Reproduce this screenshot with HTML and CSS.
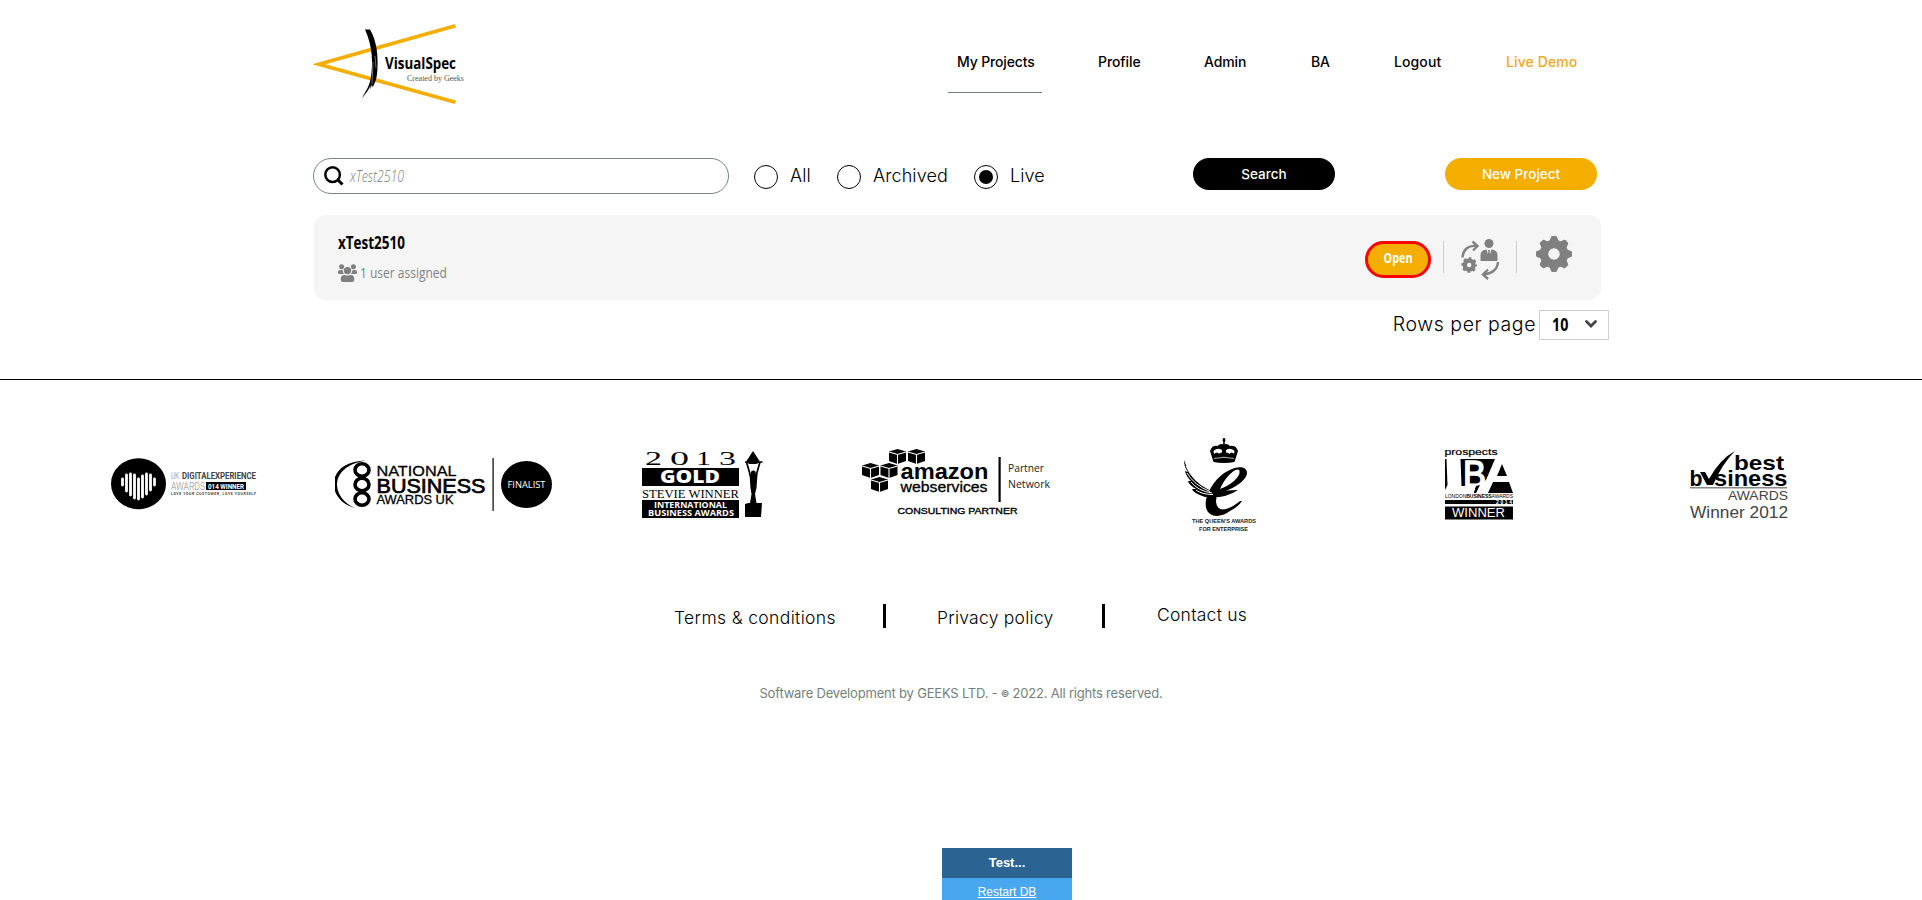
FILE: index.html
```html
<!DOCTYPE html>
<html lang="en">
<head>
<meta charset="utf-8">
<title>VisualSpec - My Projects</title>
<link rel="stylesheet" href="styles.css">
</head>
<body>
<header class="header">
  <svg class="logo" width="155" height="86" viewBox="0 0 155 86">
    <path d="M142.500 5.800L6 44.300L142.500 82.300" fill="none" stroke="#f4ae00" stroke-width="3.600" stroke-miterlimit="10"/>
    <path d="M52 9.500h5c7 12 8 26 7.500 38c-.5 12-2 14-5 20l-.5-3-2 5 .5-4c-2 5-5 8-8.500 13c3-7 7-11 8.500-19c3-15 2-34-5.500-50z" fill="#000"/>
    <path d="M60 42l-1 22M62 36l1 12" stroke="#999" stroke-width=".7"/>
    <text x="72" y="49" class="logo-name" textLength="71" lengthAdjust="spacingAndGlyphs">VisualSpec</text>
    <text x="94" y="61" class="logo-sub" textLength="57" lengthAdjust="spacingAndGlyphs">Created by Geeks</text>
  </svg>
  <nav class="nav">
    <a class="nav-link nav-active">My Projects</a><a class="nav-link">Profile</a><a class="nav-link">Admin</a><a class="nav-link">BA</a><a class="nav-link nav-wide">Logout</a><a class="nav-link nav-wide nav-demo">Live Demo</a>
  </nav>
</header>
<main class="main">
  <div class="filters">
    <div class="search">
      <svg width="20" height="20" viewBox="0 0 20 20" fill="none" stroke="#000"><circle cx="8.600" cy="8.600" r="7.300" stroke-width="2.500"/><path d="M13.500 13.500l5 5" stroke-width="3"/></svg>
      <span class="search-text">xTest2510</span>
    </div>
    <div class="radios">
      <span class="radio"></span><span class="radio-label">All</span>
      <span class="radio"></span><span class="radio-label">Archived</span>
      <span class="radio radio-on"></span><span class="radio-label">Live</span>
    </div>
    <button class="btn btn-search">Search</button>
    <button class="btn btn-new">New Project</button>
  </div>
  <section class="card">
    <div class="project">
      <div class="project-name"><span class="name-text">xTest2510</span></div>
      <div class="project-users">
        <svg width="19" height="19" viewBox="0 0 19 19" fill="#808080"><circle cx="3.600" cy="2.700" r="2.500"/><circle cx="15.400" cy="2.700" r="2.500"/><circle cx="9.500" cy="6.600" r="3.700"/><path d="M0 9V8q0-2 2-2h2.500q.3 3 2 4H1q-1 0-1-1zM19 9V8q0-2-2-2h-2.500q-.3 3-2 4H18q1 0 1-1zM2.800 16v-1.500q0-3.500 3.500-3.500h.7q2.500 1.200 5 0h.7q3.500 0 3.500 3.500V16q0 2-2 2H4.800q-2 0-2-2z"/></svg>
        <span class="users-text">1 user assigned</span>
      </div>
    </div>
    <div class="actions">
      <a class="open"><span class="open-text">Open</span></a>
      <i class="divider"></i>
      <svg class="swap" width="39" height="41" viewBox="0 0 39 41" fill="#808080">
        <circle cx="28" cy="4.500" r="4.500"/>
        <path d="M19.500 22v-6q0-5 6-5.500l2.500 8 2.500-8q6 .5 6 5.500v6z"/><path d="M27 11h2l-.3 2 .8 4-1.500 3-1.500-3 .8-4z"/>
        <path d="M1.500 18.500C2 10 8 6 15 7M11.500 2.500l5 4.500-4.500 4.500" fill="none" stroke="#808080" stroke-width="2.400"/>
        <path d="M37 23c-.5 8-7 12-14.500 12.500M27 30.500l-5 5 5 4.500" fill="none" stroke="#808080" stroke-width="2.400"/>
        <circle cx="8.200" cy="26" r="4.400" fill="none" stroke="#808080" stroke-width="4.400"/><circle cx="8.200" cy="26" r="6.500" fill="none" stroke="#808080" stroke-width="2.600" stroke-dasharray="2.800 2.305" stroke-dashoffset="1.400"/>
      </svg>
      <i class="divider"></i>
      <svg class="gear" width="36" height="36" viewBox="0 0 36 36"><circle cx="18" cy="18" r="10" fill="none" stroke="#808080" stroke-width="8.500"/><g fill="#808080"><path id="t" d="M13.500 5l1.500-4q.4-1 1.400-1h3.200q1 0 1.400 1l1.500 4z"/><use href="#t" transform="rotate(45 18 18)"/><use href="#t" transform="rotate(90 18 18)"/><use href="#t" transform="rotate(135 18 18)"/><use href="#t" transform="rotate(180 18 18)"/><use href="#t" transform="rotate(225 18 18)"/><use href="#t" transform="rotate(270 18 18)"/><use href="#t" transform="rotate(315 18 18)"/></g></svg>
    </div>
  </section>
  <div class="pager">
    <span class="pager-label">Rows per page</span>
    <div class="select"><span class="select-text">10</span><svg width="12" height="9" viewBox="0 0 12 9"><path d="M1.500 1.500L6 6l4.500-4.500" fill="none" stroke="#444" stroke-width="2.800" stroke-linecap="round"/></svg></div>
  </div>
</main>
<footer class="footer">
  <div class="awards">
    <svg width="150" height="96" viewBox="110 436 150 96">
      <ellipse cx="138.500" cy="483.800" rx="27.500" ry="25.500"/>
      <path d="M122.500 479v6M126.500 475v16M130.500 474v21M134.500 475v23M138.500 479v20M142.500 476v21M146.500 474v20M150.500 475v15M154.500 479v6" stroke="#fff" stroke-width="2.800" stroke-linecap="round"/>
      <g class="cond"><text x="171" y="479" font-size="9.500" fill="#aaa" textLength="8" lengthAdjust="spacingAndGlyphs">UK</text><text x="182" y="479" font-size="9.500" font-weight="700" fill="#444" textLength="74" lengthAdjust="spacingAndGlyphs">DIGITALEXPERIENCE</text>
      <text x="171" y="490" font-size="11" font-weight="300" fill="#888" textLength="34" lengthAdjust="spacingAndGlyphs">AWARDS</text></g>
      <path d="M206 482h40v8h-40z"/><text x="208" y="489" class="cond" font-size="7.500" font-weight="700" fill="#fff" textLength="36" lengthAdjust="spacingAndGlyphs">014 WINNER</text>
      <text x="171" y="495" class="cond" font-size="3.500" font-weight="700" fill="#444" textLength="85">LOVE YOUR CUSTOMER, LOVE YOURSELF</text>
    </svg>
    <svg width="220" height="96" viewBox="335 436 220 96">
      <path d="M366 460.500C325 461 325 500 355 508C329 496 330 466 366 460.500z"/>
      <g fill="none" stroke="#000" stroke-width="3.600"><ellipse cx="362" cy="470" rx="7" ry="6.300"/><ellipse cx="362" cy="484.500" rx="7" ry="6.300"/><ellipse cx="362" cy="499" rx="7" ry="6.300"/></g>
      <g class="arial"><text x="376.500" y="476" font-size="15.500" stroke="#000" stroke-width=".3" textLength="80" lengthAdjust="spacingAndGlyphs">NATIONAL</text>
      <text x="376.500" y="493" font-size="20.500" stroke="#000" stroke-width=".7" textLength="109" lengthAdjust="spacingAndGlyphs">BUSINESS</text>
      <text x="376.500" y="504" font-size="13.500" stroke="#000" stroke-width=".3" textLength="77" lengthAdjust="spacingAndGlyphs">AWARDS UK</text></g>
      <path d="M492.500 458h1.200v53h-1.200z"/><ellipse cx="526.500" cy="484.500" rx="25.500" ry="23.500"/>
      <text x="507.500" y="488" class="noto" font-size="9.500" fill="#fff" textLength="38" lengthAdjust="spacingAndGlyphs">FINALIST</text>
    </svg>
    <svg width="125" height="96" viewBox="642 436 125 96">
      <text class="serif" y="465" font-size="18.500"><tspan x="645" textLength="17" lengthAdjust="spacingAndGlyphs">2</tspan><tspan x="670" textLength="19" lengthAdjust="spacingAndGlyphs">0</tspan><tspan x="696" textLength="15" lengthAdjust="spacingAndGlyphs">1</tspan><tspan x="719" textLength="17" lengthAdjust="spacingAndGlyphs">3</tspan></text>
      <path d="M642 468h97v18h-97zM642 500h97v18h-97z"/>
      <text x="660" y="483" class="noto" font-size="18" font-weight="800" fill="#fff" textLength="60" lengthAdjust="spacingAndGlyphs">GOLD</text>
      <text x="642" y="497.500" class="serif" font-size="13.500" textLength="97" lengthAdjust="spacingAndGlyphs">STEVIE WINNER</text>
      <text x="654" y="508" class="noto" font-size="8" font-weight="700" fill="#fff" textLength="73" lengthAdjust="spacingAndGlyphs">INTERNATIONAL</text>
      <text x="648" y="516" class="noto" font-size="8.500" font-weight="700" fill="#fff" textLength="86" lengthAdjust="spacingAndGlyphs">BUSINESS AWARDS</text>
      <path d="M753 451l6.500 10q-1 3-3 3h-7q-2 0-3-3z"/><path d="M745 462h17.500M746.500 462l4 14M760 462l-4 14" stroke="#000" stroke-width="1.700" fill="none"/><circle cx="753.300" cy="473" r="2.500"/>
      <path d="M749.500 474h8l-1 14-1.500 6 1.500 9h5.500l-1 14h-16v-13l3.500-1h1.500l1.500-9-1-6z"/>
    </svg>
    <svg width="192" height="96" viewBox="862 436 192 96">
      <defs><g id="cube"><path d="M0 2.500L8.500 0 17 2.500V12l-8.500 3L0 12z"/><path d="M0 3l8.500 2.500L17 3M8.500 5.500V15" fill="none" stroke="#fff" stroke-width="1.100"/></g></defs>
      <use href="#cube" x="889" y="449"/><use href="#cube" x="908" y="449"/><use href="#cube" x="862" y="463"/><use href="#cube" x="880.500" y="463"/><use href="#cube" x="871" y="477"/>
      <g class="arial"><text x="900.500" y="479" font-size="22" font-weight="700" textLength="88" lengthAdjust="spacingAndGlyphs">amazon</text>
      <text x="900.500" y="492" font-size="14.500" stroke="#000" stroke-width=".3" textLength="87" lengthAdjust="spacingAndGlyphs">webservices</text></g>
      <path d="M998.500 457h2.200v45h-2.200z"/>
      <g class="noto"><text x="1008" y="471.500" font-size="11" fill="#222" textLength="36" lengthAdjust="spacingAndGlyphs">Partner</text><text x="1008" y="487.500" font-size="11" fill="#222" textLength="42" lengthAdjust="spacingAndGlyphs">Network</text></g>
      <text x="897.500" y="514" class="arial" font-size="9.200" stroke="#000" stroke-width=".35" textLength="120" lengthAdjust="spacingAndGlyphs">CONSULTING PARTNER</text>
    </svg>
    <svg width="78" height="96" viewBox="1183 436 78 96">
      <circle cx="1224" cy="440" r="1.500"/><path d="M1223.200 438h1.600v7h-1.600z"/>
      <path d="M1213.500 462l-3.500-11q2-6 7.500-5 3-3 6.500-1.500 3-1.500 6 1.500 6-1 8 5l-3.500 11q-10.500 2-21 0z"/>
      <path d="M1213.500 451q4-4 8.500-1v4h-8zM1234.500 451q-4-4-8.500-1v4h8z" fill="#fff"/><path d="M1214 456q3-5 5 0 2-5 5 0 3-5 5 0 3-5 5 0" fill="none" stroke="#000" stroke-width="2.200"/><path d="M1214 458.500q10-2.500 20 0" fill="none" stroke="#fff" stroke-width=".7"/>
      <path d="M1213 494C1233 491 1247 480 1247 473C1247 463 1227 466 1214 483C1195 510 1212 524 1230 511Q1238 507 1242 501L1240 501C1230 509 1217 515 1216 501Q1216 497 1218 493zM1220 489C1225 477 1236 467 1239 470C1242 474 1234 484 1220 489z"/>
      <path d="M1184 460C1190 477 1198 486 1215 491L1238 490Q1225 499 1205 497Q1193 493 1192 489L1196 489Q1189 485 1188 481L1191 481Q1186 476 1185 471L1188 472Q1184 467 1184 460z"/>
      <path d="M1186 466Q1192 481 1210 490M1187 473Q1194 485 1210 491.500M1191 482Q1198 491 1212 493M1196 490Q1202 494.500 1213 494.500" fill="none" stroke="#fff" stroke-width="1"/>
      <g class="arial" font-size="4.900" font-weight="700" fill="#222"><text x="1192" y="522.500" textLength="64" lengthAdjust="spacingAndGlyphs">THE QUEEN'S AWARDS</text><text x="1199" y="530.500" textLength="49" lengthAdjust="spacingAndGlyphs">FOR ENTERPRISE</text></g>
    </svg>
    <svg width="72" height="96" viewBox="1444 436 72 96">
      <text x="1444.500" y="454.500" class="arial" font-size="8.500" stroke="#000" stroke-width=".2" textLength="53" lengthAdjust="spacingAndGlyphs">prospects</text>
      <path d="M1445 459h1.500l1 26-2.500 5zM1458 459h49l-11 24-4 10h-18l2-7h-17z"/>
      <path d="M1458 459h2.500l1 27h-3.500z" fill="#fff"/>
      <text x="1463" y="486.500" class="arial" font-size="37" fill="#fff" stroke="#fff" stroke-width="1.500" textLength="23" lengthAdjust="spacingAndGlyphs">B</text>
      <path d="M1495 459h12v34h-31l3-8 7-5z" fill="#fff"/><path d="M1487 459h6l-8 17q4-6 2-10 2-4 0-7zM1502 464l5 12h-10zM1493 482h16l4 11h-25zM1476 486l4-1-4 8h-2z"/>
      <text x="1445" y="498" class="arial" font-size="5" textLength="68" lengthAdjust="spacingAndGlyphs">LONDON<tspan font-weight="700">BUSINESS</tspan>AWARDS</text>
      <path d="M1445 500h68v4h-68zM1445 506.500h68v13h-68z"/><text x="1496" y="504" class="arial" font-size="5" font-weight="700" fill="#fff" textLength="16">2014</text>
      <text x="1452" y="517" class="arial" font-size="12.500" fill="#fff" textLength="53" lengthAdjust="spacingAndGlyphs">WINNER</text>
    </svg>
    <svg width="102" height="96" viewBox="1688 436 102 96">
      <g class="arial"><g font-weight="700"><text x="1734" y="470" font-size="20.500" textLength="50" lengthAdjust="spacingAndGlyphs">best</text>
      <text x="1689.500" y="485.500" font-size="21.500" textLength="13" lengthAdjust="spacingAndGlyphs">b</text><text x="1714" y="485.500" font-size="21.500" textLength="73.500" lengthAdjust="spacingAndGlyphs">siness</text></g>
      <path d="M1700 472h5l4 7q11-20 26-28-13 13-22 34h-6z"/><path d="M1690 487h97v1.500h-97z" fill="#888"/>
      <text x="1728" y="500" font-size="13.500" fill="#444" textLength="60" lengthAdjust="spacingAndGlyphs">AWARDS</text>
      <text x="1690" y="517.500" font-size="17" fill="#444" textLength="98" lengthAdjust="spacingAndGlyphs">Winner 2012</text></g>
    </svg>
  </div>
  <div class="links"><a class="link link-terms">Terms &amp; conditions</a><i class="bar"></i><a class="link">Privacy policy</a><i class="bar"></i><a class="link link-contact">Contact us</a></div>
  <p class="copy">Software Development by GEEKS LTD. - <span class="copy-sign">©</span> 2022. All rights reserved.</p>
</footer>
<aside class="test"><div class="test-title">Test...</div><div class="test-body"><a class="test-link">Restart DB</a></div></aside>
</body>
</html>
```
FILE: styles.css
```css
* { box-sizing: border-box; }
body { margin: 0; height: 900px; overflow: hidden; background: #fff; color: #000; font-family: Inter, "Open Sans", sans-serif; display: flex; flex-direction: column; }
svg { display: block; flex: none; }
i { display: block; flex: none; }
.header { display: flex; flex: none; height: 158px; padding: 20px 0 0 313px; }
.logo { flex: none; }
.logo-name { font: 700 16.500px "Open Sans", sans-serif; }
.logo-sub { font: 8px "Liberation Serif", serif; fill: #555; }
.nav { display: grid; grid-template-columns: 141px 106px 107px 83px 112px 89px; margin-left: 480px; height: 73px; justify-items: start; }
.nav-link { display: flex; align-items: center; height: 73px; padding: 10px 9px 0; font-size: 14px; font-weight: 450; letter-spacing: -.1px; white-space: nowrap; }
.nav-active { width: 94px; border-bottom: 1px solid #6c837c; padding-top: 11px; letter-spacing: -.15px; }
.nav-wide { letter-spacing: .1px; }
.nav-demo { color: #f5a623; }
.main { height: 222px; border-bottom: 1px solid #000; flex: none; }
.filters { display: flex; height: 57px; padding-left: 313px; align-items: flex-start; }
.search { display: flex; align-items: center; width: 416px; height: 36px; border: 1px solid #75837f; border-radius: 18px; padding-left: 10px; gap: 6px; }
.search-text { font: italic 300 16px "Open Sans", sans-serif; color: #757f7d; transform: scaleX(.77); transform-origin: left; }
.radios { display: grid; grid-template-columns: 36px 47px 36px 101px 36px 60px; align-items: center; height: 38px; margin-left: 25px; }
.radio { width: 24px; height: 24px; border: 1px solid #000; border-radius: 50%; padding: 4px; }
.radio-on::before { content: ""; display: block; width: 14px; height: 14px; border-radius: 50%; background: #000; }
.radio-label { font-size: 18px; font-weight: 300; letter-spacing: .1px; line-height: 22px; padding-bottom: 2px; }
.btn { height: 32px; border: 0; border-radius: 16px; color: #fff; font: 450 13.500px Inter, sans-serif; padding: 0 0 1px; }
.btn-search { width: 142px; background: #000; margin-left: 123px; }
.btn-new { width: 152px; background: #f4ae00; margin-left: 110px; }
.card { display: flex; justify-content: space-between; margin-left: 314px; width: 1287px; height: 85px; border-radius: 12px; background: #f5f5f5; padding-left: 24px; }
.project { padding-top: 14px; }
.project-name { height: 26px; }
.name-text, .users-text, .select-text { display: inline-block; transform-origin: left; white-space: nowrap; }
.name-text { font: 700 17.500px/26px "Open Sans", sans-serif; transform: scaleX(.77); }
.project-users { display: flex; align-items: center; height: 36px; gap: 3px; }
.users-text { font: 15px "Open Sans", sans-serif; color: #7e8583; transform: scaleX(.8); padding-bottom: 2px; }
.actions { display: flex; align-items: flex-start; }
.open { display: flex; align-items: center; justify-content: center; width: 66px; height: 37px; border: 3px solid red; border-radius: 19px; background: #f4ae00; margin: 26px 12px 0 0; padding-bottom: 4px; }
.open-text { font: 700 13.500px "Open Sans", sans-serif; color: #fff; transform: scaleX(.8); }
.divider { width: 1px; height: 32px; background: #ccc; margin-top: 26px; }
.swap { margin: 24px 16px 0 17px; }
.gear { margin: 21px 29px 0 19px; }
.pager { display: flex; justify-content: flex-end; align-items: center; height: 30px; margin-top: 10px; padding-right: 313px; gap: 3px; }
.pager-label { font-size: 19.500px; font-weight: 300; letter-spacing: .55px; white-space: nowrap; padding-bottom: 2px; }
.select { display: flex; align-items: center; justify-content: space-between; width: 70px; height: 30px; border: 1px solid #ccd0d1; padding: 0 11px 1px 12px; }
.select-text { font: 700 17px "Open Sans", sans-serif; transform: scaleX(.84); }
.footer { flex: none; height: 468px; padding-top: 56px; }
.awards { display: grid; grid-template-columns: 225px 307px 220px 321px 261px 244px 102px; padding-left: 110px; height: 96px; }
.arial { font-family: "Liberation Sans", Arial, sans-serif; }
.serif { font-family: "Liberation Serif", serif; }
.noto { font-family: "Open Sans", "Noto Sans", sans-serif; }
.cond { font-family: Roboto, sans-serif; }
.links { display: grid; grid-template-columns: 207px 55px 164px 55px 92px; padding: 72px 0 0 675px; height: 99px; align-items: start; column-gap: 0; }
.link { font-size: 17.500px; font-weight: 300; letter-spacing: .25px; line-height: 28px; white-space: nowrap; }
.link-terms { letter-spacing: .35px; margin-left: -1px; }
.link-contact { line-height: 22px; margin-left: 1px; }
.bar { width: 2.500px; height: 24px; background: #000; margin-left: 1px; }
.copy { margin: 52px 0 0; text-align: center; font-size: 13px; line-height: 20px; letter-spacing: -.19px; color: #737f7d; }
.copy-sign { font-size: 9px; font-weight: 700; vertical-align: 1px; }
.test { position: absolute; left: 942px; top: 848px; width: 130px; font: 13px "Liberation Sans", Arial, sans-serif; color: #fff; text-align: center; }
.test-title { height: 30px; line-height: 29px; background: #2b6492; font-weight: 700; }
.test-body { height: 22px; background: #49a7ef; line-height: 28px; font-size: 12px; overflow: hidden; }
.test-link { text-decoration: underline; }
```
